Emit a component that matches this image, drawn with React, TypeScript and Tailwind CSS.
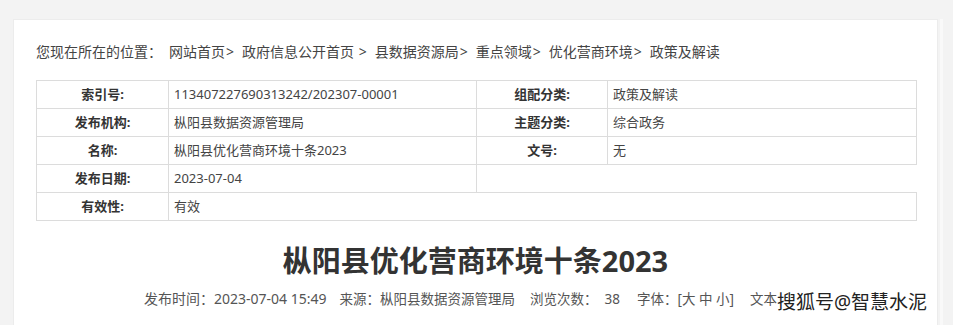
import React from "react";

const font = '"Noto Sans","Noto Sans CJK SC",sans-serif';

function Label({ children }: { children: React.ReactNode }) {
  return (
    <td className="border border-[#dcdcdc] text-center font-bold text-[#333] text-[13px] h-[28px] p-0">
      {children}
    </td>
  );
}
function Val({ children, span }: { children?: React.ReactNode; span?: number }) {
  return (
    <td colSpan={span} className="border border-[#dcdcdc] text-left text-[#444] text-[13px] h-[28px] py-0 pl-[5px]">
      {children}
    </td>
  );
}

function Sep() {
  return <span className="ml-[1px] mr-[8px]">&gt;</span>;
}

export default function App() {
  return (
    <div className="relative w-[953px] h-[325px] overflow-hidden bg-[#f3f3f3]" style={{ fontFamily: font }}>
      <div className="flex">
        <div className="ml-[13px] mt-[19px] w-[925px] h-[320px] bg-white border border-[#ececec] px-[22px]">
          <div className="h-[60px] pt-[22px] text-[14px] leading-[20px] text-[#444] whitespace-nowrap">
            您现在所在的位置：<span className="ml-[7px]">网站首页</span><Sep />政府信息公开首页 <Sep />县数据资源局<Sep />重点领域<Sep />优化营商环境<Sep />政策及解读
          </div>
          <table className="border-collapse w-[880px] table-fixed">
            <colgroup>
              <col className="w-[132px]" />
              <col className="w-[308px]" />
              <col className="w-[131px]" />
              <col className="w-[309px]" />
            </colgroup>
            <tbody>
              <tr>
                <Label>索引号:</Label>
                <Val>113407227690313242/202307-00001</Val>
                <Label>组配分类:</Label>
                <Val>政策及解读</Val>
              </tr>
              <tr>
                <Label>发布机构:</Label>
                <Val>枞阳县数据资源管理局</Val>
                <Label>主题分类:</Label>
                <Val>综合政务</Val>
              </tr>
              <tr>
                <Label>名称:</Label>
                <Val>枞阳县优化营商环境十条2023</Val>
                <Label>文号:</Label>
                <Val>无</Val>
              </tr>
              <tr>
                <Label>发布日期:</Label>
                <Val>2023-07-04</Val>
                <td colSpan={2} className="border border-[#dcdcdc] border-r-white h-[28px]"></td>
              </tr>
              <tr>
                <Label>有效性:</Label>
                <Val span={3}>有效</Val>
              </tr>
            </tbody>
          </table>
          <h1 className="mt-[21px] text-center text-[29px] leading-[38px] font-bold text-[#333]">
            枞阳县优化营商环境十条2023
          </h1>
          <div className="mt-[9px] ml-[108px] flex text-[13.5px] leading-[20px] text-[#555] whitespace-nowrap">
            <span className="text-[14px]">发布时间：2023-07-04 15:49</span>
            <span className="ml-[13px]">来源：枞阳县数据资源管理局</span>
            <span className="ml-[15px]">浏览次数：&nbsp; 38</span>
            <span className="ml-[17px]">字体：[大 中 小]</span>
            <span className="ml-[16px]">文本</span>
          </div>
        </div>
        <div className="ml-[2px] mt-[19px] w-[3px] h-[310px] bg-[#f9f9f9]"></div>
      </div>
      <div
        className="absolute left-[777px] top-[289px] text-[19px] leading-[26px] text-[#222] whitespace-nowrap"
        style={{ textShadow: "0 0 2px #fff, 0 0 2px #fff, 0 0 3px #fff" }}
      >
        搜狐号@智慧水泥
      </div>
    </div>
  );
}
